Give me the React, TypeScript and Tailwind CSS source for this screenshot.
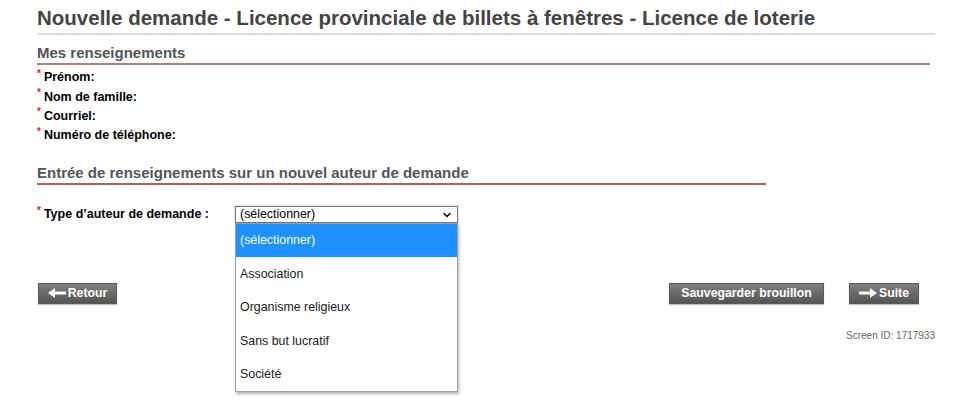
import { ChevronDown } from 'lucide-react'

const fields = ['Prénom:', 'Nom de famille:', 'Courriel:', 'Numéro de téléphone:']
const options = ['(sélectionner)', 'Association', 'Organisme religieux', 'Sans but lucratif', 'Société']

function Req() {
  return <span className="relative -top-[4px] mr-[3px] text-[10px] leading-none text-[#e8202a]">*</span>
}

function ArrowLeft() {
  return (
    <svg width="18" height="10" viewBox="0 0 18 10" className="mr-[2px]">
      <path d="M0 5 L7 0 L7 3.5 L18 3.5 L18 6.5 L7 6.5 L7 10 Z" fill="#fff" />
    </svg>
  )
}

function ArrowRight() {
  return (
    <svg width="18" height="10" viewBox="0 0 18 10" className="mr-[2px]">
      <path d="M18 5 L11 0 L11 3.5 L0 3.5 L0 6.5 L11 6.5 L11 10 Z" fill="#fff" />
    </svg>
  )
}

function GrayButton({ children, className = '' }: { children: React.ReactNode; className?: string }) {
  return (
    <button className={`flex h-[21px] items-center justify-center border border-[#5a5a5a] bg-gradient-to-b from-[#808080] to-[#555] text-[12.3px] font-bold text-white shadow-[0_1px_1px_rgba(0,0,0,0.25)] ${className}`}>
      {children}
    </button>
  )
}

export default function App() {
  return (
    <div className="min-h-[413px] bg-white pl-[37px] pr-[40px] pt-[6px] font-['Liberation_Sans',Arial,sans-serif] text-black">
      {/* title */}
      <h1 className="border-b-2 border-[#dcdcdc] pb-[4px] text-[20.5px] font-bold leading-[23px] text-[#444]">
        Nouvelle demande - Licence provinciale de billets à fenêtres - Licence de loterie
      </h1>

      {/* my info */}
      <div className="mr-[5px] mt-[9px] border-b-2 border-[#c07a70] pb-[1px] text-[15px] font-bold leading-[18px] text-[#555]">
        Mes renseignements
      </div>
      <div className="mt-[3px] flex flex-col">
        {fields.map(f => (
          <div key={f} className="flex h-[19.3px] items-center text-[12.5px] font-bold">
            <Req />{f}
          </div>
        ))}
      </div>

      {/* new author */}
      <div className="mt-[19px] w-[729px] border-b-2 border-[#b8604f] pb-[1px] text-[15px] font-bold leading-[18px] text-[#555]">
        Entrée de renseignements sur un nouvel auteur de demande
      </div>

      <div className="mt-[20px] flex items-center">
        <div className="w-[198px] text-[12.5px] font-bold">
          <Req />Type d’auteur de demande :
        </div>
        <div className="relative">
          <div className="flex h-[17px] w-[223px] items-center justify-between border border-[#767676] bg-white pl-[4px] pr-[4px] text-[12.4px] leading-none shadow-[0_0_2px_rgba(0,0,0,0.3)]">
            <span>(sélectionner)</span>
            <ChevronDown size={12} strokeWidth={3} />
          </div>
          <div className="absolute left-0 top-[17px] z-10 w-[223px] border border-[#a0a0a0] bg-white shadow-[1px_2px_3px_rgba(0,0,0,0.3)]">
            {options.map((o, i) => (
              <div
                key={o}
                className={`flex h-[33.4px] items-center pl-[4px] text-[12.4px] ${i === 0 ? 'bg-[#1e90ff] text-white' : 'text-[#1a1a1a]'}`}
              >
                {o}
              </div>
            ))}
          </div>
        </div>
      </div>

      {/* buttons */}
      <div className="mt-[59px] flex items-center justify-between pl-[1px] pr-[16px]">
        <GrayButton className="w-[79px]">
          <ArrowLeft />Retour
        </GrayButton>
        <div className="flex gap-[25px]">
          <GrayButton className="w-[155px]">Sauvegarder brouillon</GrayButton>
          <GrayButton className="w-[70px]">
            <ArrowRight />Suite
          </GrayButton>
        </div>
      </div>

      <div className="mt-[24px] text-right text-[10px] text-[#666]">Screen ID: 1717933</div>
    </div>
  )
}
